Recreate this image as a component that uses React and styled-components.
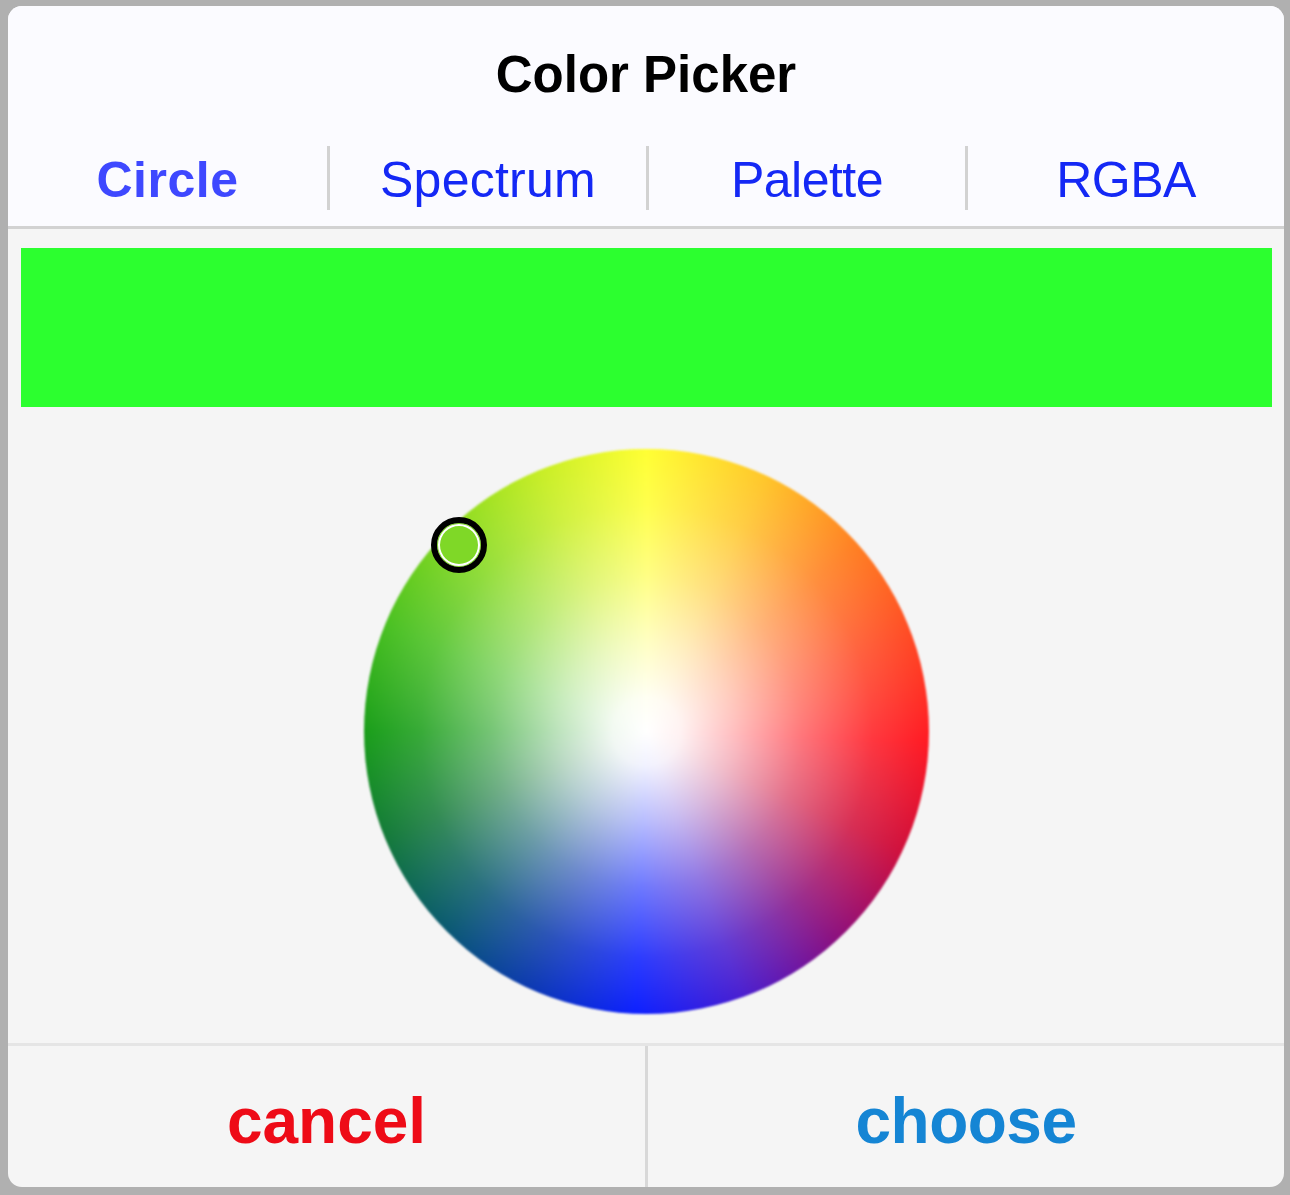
import React from "react";
import styled, { createGlobalStyle } from "styled-components";

const Global = createGlobalStyle`
  html, body { margin: 0; padding: 0; background: #b0b0b0; }
  body { font-family: "Liberation Sans", Arial, sans-serif; }
`;

const Page = styled.div`
  width: 1290px;
  height: 1195px;
  padding: 6px 6px 8px 8px;
  box-sizing: border-box;
  display: flex;
`;

const Dialog = styled.div`
  flex: 1;
  display: flex;
  flex-direction: column;
  background: #f5f5f5;
  border-radius: 14px;
  overflow: hidden;
`;

const Header = styled.header`
  height: 223px;
  box-sizing: border-box;
  flex: none;
  background: #fbfbff;
  border-bottom: 3px solid #d2d2d2;
  display: flex;
  flex-direction: column;
`;

const Title = styled.h1`
  margin: 0;
  height: 136px;
  flex: none;
  display: flex;
  align-items: center;
  justify-content: center;
  font-size: 51px;
  font-weight: 700;
  color: #000;
`;

const Tabs = styled.nav`
  display: grid;
  grid-template-columns: repeat(4, 1fr);
  margin-top: 4px;
`;

const Tab = styled.div`
  height: 64px;
  padding-top: 4px;
  box-sizing: border-box;
  display: flex;
  align-items: center;
  justify-content: center;
  font-size: 50px;
  letter-spacing: ${(p) => p.$track}px;
  font-weight: ${(p) => (p.$active ? 700 : 400)};
  color: ${(p) => (p.$active ? "#3e48ff" : "#1428f5")};
  border-left: ${(p) => (p.$first ? "none" : "3px solid #d2d2d2")};
`;

const Body = styled.main`
  flex: 1;
  padding: 19px 12px 0 13px;
  display: flex;
  flex-direction: column;
  align-items: stretch;
`;

const Swatch = styled.div`
  height: 159px;
  flex: none;
  background: #2cff2f;
`;

const WheelArea = styled.div`
  flex: 1;
  display: flex;
  justify-content: center;
  padding-top: 42px;
`;

const Wheel = styled.div`
  position: relative;
  width: 565px;
  height: 565px;
  margin-left: -1px;
`;

const Disc = styled.div`
  width: 100%;
  height: 100%;
  border-radius: 50%;
  filter: blur(0.8px);
  background:
    radial-gradient(circle closest-side, #fff 0%, rgba(255,255,255,0.94) 12%, rgba(255,255,255,0.7) 32%, rgba(255,255,255,0.4) 55%, rgba(255,255,255,0.13) 80%, rgba(255,255,255,0) 100%),
    conic-gradient(
      #ffff33 0deg, #ffc62a 25deg, #ff8022 48deg, #ff4a24 70deg, #ff1a23 92deg,
      #d0103c 115deg, #8a1080 138deg, #4a1fd0 160deg, #0d20ff 182deg,
      #0c3ab0 205deg, #0a5a70 226deg, #147a3a 248deg, #1a9e1a 270deg,
      #49c022 292deg, #85d920 315deg, #c8ee26 338deg, #ffff33 360deg
    );
`;

const Handle = styled.div`
  position: absolute;
  left: 67px;
  top: 68px;
  width: 56px;
  height: 56px;
  box-sizing: border-box;
  border-radius: 50%;
  border: 6px solid #000;
  background: #7fd827;
  box-shadow: inset 0 0 0 1px #7fd827, inset 0 0 0 3px #ffffff;
  filter: blur(0.3px);
`;

const Footer = styled.footer`
  height: 144px;
  box-sizing: border-box;
  flex: none;
  border-top: 3px solid #e5e5e5;
  display: grid;
  grid-template-columns: 637px 1fr;
`;

const Action = styled.div`
  display: flex;
  align-items: center;
  justify-content: center;
  padding-top: 8px;
  font-size: 64px;
  font-weight: 700;
  letter-spacing: ${(p) => p.$track}px;
  color: ${(p) => p.$color};
  border-left: ${(p) => (p.$divided ? "3px solid #d8d8d8" : "none")};
`;

export default function App() {
  return (
    <>
      <Global />
      <Page>
        <Dialog>
          <Header>
            <Title>Color Picker</Title>
            <Tabs>
              <Tab $active $first $track={0.5}>Circle</Tab>
              <Tab $track={0.25}>Spectrum</Tab>
              <Tab $track={-0.5}>Palette</Tab>
              <Tab $track={-0.5}>RGBA</Tab>
            </Tabs>
          </Header>
          <Body>
            <Swatch />
            <WheelArea>
              <Wheel>
                <Disc />
                <Handle />
              </Wheel>
            </WheelArea>
          </Body>
          <Footer>
            <Action $color="#ee0b17" $track={0}>cancel</Action>
            <Action $color="#1585d4" $divided $track={-0.5}>choose</Action>
          </Footer>
        </Dialog>
      </Page>
    </>
  );
}
